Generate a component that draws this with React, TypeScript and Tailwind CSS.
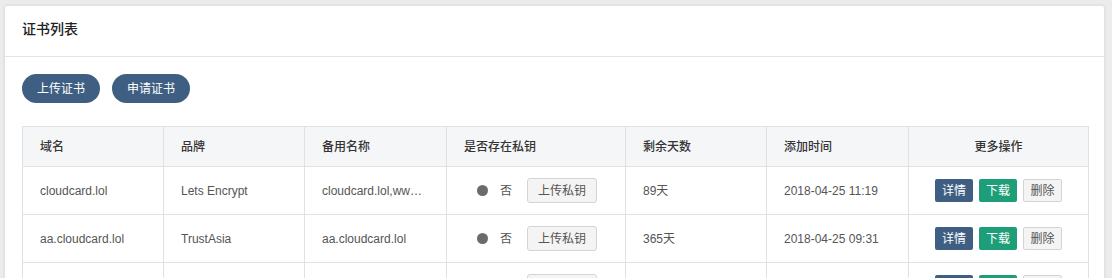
import React from 'react';

interface Cert {
    domain: string;
    brand: string;
    alt: string;
    days: string;
    added: string;
}

const certs: Cert[] = [
    { domain: 'cloudcard.lol', brand: 'Lets Encrypt', alt: 'cloudcard.lol,www.cloudcard.lol', days: '89天', added: '2018-04-25 11:19' },
    { domain: 'aa.cloudcard.lol', brand: 'TrustAsia', alt: 'aa.cloudcard.lol', days: '365天', added: '2018-04-25 09:31' },
    { domain: 'bb.cloudcard.lol', brand: 'TrustAsia', alt: 'bb.cloudcard.lol', days: '365天', added: '2018-04-24 18:02' },
];

const cols = ['w-[141px]', 'w-[141px]', 'w-[142px]', 'w-[179px]', 'w-[141px]', 'w-[142px]', 'w-[180px]'];

export default function App() {
    return (
        <div
            className="h-[278px] overflow-hidden bg-[#ececec] pt-[5px] pl-[4px] pr-[7px]"
            style={{ fontFamily: '"Liberation Sans", "Noto Sans CJK SC", sans-serif' }}
        >
            <div className="bg-white border border-[#e2e2e2] rounded-[3px] shadow-[0_0_3px_rgba(0,0,0,0.08)] min-h-[400px]">
                {/* 标题 */}
                <div className="h-[51px] flex items-center pb-[3px] px-[17px] border-b border-[#e4e4e4]">
                    <h2 className="text-[14px] font-medium text-[#222]">证书列表</h2>
                </div>

                <div className="px-[17px] pt-[17px]">
                    <div className="flex gap-[12px]">
                        <button className="h-[29px] w-[78px] rounded-full bg-[#3f5f82] text-white text-[12px]">上传证书</button>
                        <button className="h-[29px] w-[78px] rounded-full bg-[#3f5f82] text-white text-[12px]">申请证书</button>
                    </div>

                    <table className="mt-[23px] w-[1066px] table-fixed border-collapse border border-[#e1e1e1] text-[12px]">
                        <colgroup>
                            {cols.map((c, i) => (
                                <col key={i} className={c} />
                            ))}
                        </colgroup>
                        <thead>
                            <tr className="h-[40px] bg-[#f5f6f8] text-[#333]">
                                <th className="border border-[#e1e1e1] text-left font-medium pl-[17px]">域名</th>
                                <th className="border border-[#e1e1e1] text-left font-medium pl-[17px]">品牌</th>
                                <th className="border border-[#e1e1e1] text-left font-medium pl-[17px]">备用名称</th>
                                <th className="border border-[#e1e1e1] text-left font-medium pl-[17px]">是否存在私钥</th>
                                <th className="border border-[#e1e1e1] text-left font-medium pl-[17px]">剩余天数</th>
                                <th className="border border-[#e1e1e1] text-left font-medium pl-[17px]">添加时间</th>
                                <th className="border border-[#e1e1e1] text-center font-medium">更多操作</th>
                            </tr>
                        </thead>
                        <tbody className="text-[#555]">
                            {certs.map(c => (
                                <tr key={c.domain} className="h-[48px]">
                                    <td className="border border-[#e1e1e1] pl-[17px]">{c.domain}</td>
                                    <td className="border border-[#e1e1e1] pl-[17px]">{c.brand}</td>
                                    <td className="border border-[#e1e1e1] pl-[17px] pr-[16px] truncate">{c.alt}</td>
                                    <td className="border border-[#e1e1e1]">
                                        <div className="flex items-center pl-[30px]">
                                            <span className="w-[11px] h-[11px] rounded-full bg-[#6b6b6b]" />
                                            <span className="ml-[12px]">否</span>
                                            <button className="ml-[15px] h-[25px] w-[70px] rounded-[3px] border border-[#d4d4d4] bg-[#f4f4f4] text-[#555]">上传私钥</button>
                                        </div>
                                    </td>
                                    <td className="border border-[#e1e1e1] pl-[17px]">{c.days}</td>
                                    <td className="border border-[#e1e1e1] pl-[17px]">{c.added}</td>
                                    <td className="border border-[#e1e1e1]">
                                        <div className="flex justify-center gap-[6px]">
                                            <button className="h-[23px] w-[38px] rounded-[2px] bg-[#3f5f82] text-white">详情</button>
                                            <button className="h-[23px] w-[38px] rounded-[2px] bg-[#1e9e78] text-white">下载</button>
                                            <button className="h-[23px] w-[39px] rounded-[2px] border border-[#d4d4d4] bg-[#f4f4f4] text-[#555]">删除</button>
                                        </div>
                                    </td>
                                </tr>
                            ))}
                        </tbody>
                    </table>
                </div>
            </div>
        </div>
    );
}
